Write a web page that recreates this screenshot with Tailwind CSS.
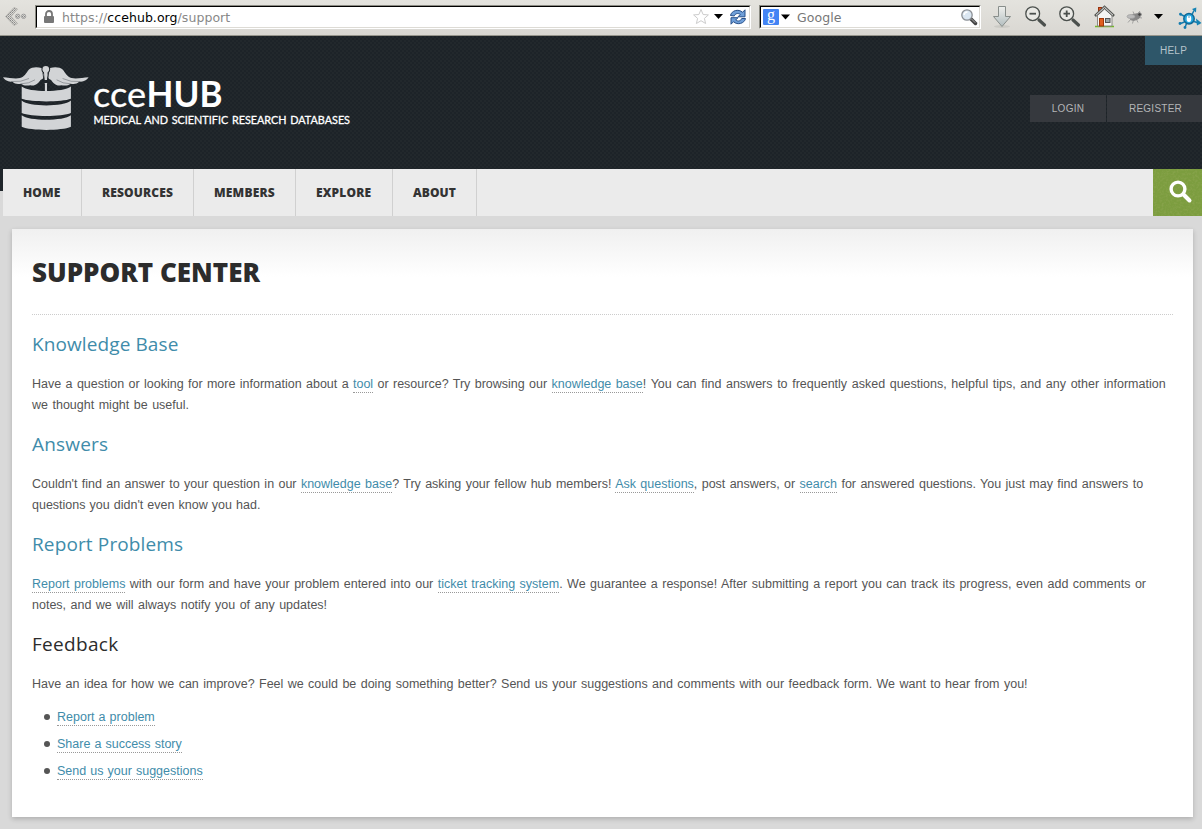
<!DOCTYPE html>
<html lang="en">
<head>
<meta charset="utf-8">
<title>cceHUB Support</title>
<script src="https://cdn.jsdelivr.net/npm/@tailwindcss/browser@4"></script>
</head>
<body class="h-[829px] w-[1202px] overflow-hidden bg-[#d9d9d9] font-['Liberation_Sans',sans-serif] text-[12.5px] text-[#555]">

<!-- Browser toolbar -->
<div class="flex h-[36px] w-full overflow-hidden border-b border-[#96958c] bg-linear-to-b from-[#e4e3de] to-[#d9d7d2] pt-[5px] font-['DejaVu_Sans',sans-serif] text-[12.5px]">
  <svg class="h-[24px] w-[35px] shrink-0" viewBox="0 5 35 24">
    <defs><pattern id="dots" width="2" height="2" patternUnits="userSpaceOnUse"><rect width="2" height="2" fill="#d8d7d3"/><rect width="1" height="1" fill="#888"/><rect x="1" y="1" width="1" height="1" fill="#a5a5a2"/></pattern></defs>
    <path d="M5.500 16.500 14 7.500l3.500 1.500-6.500 7.500 6.500 7-3.500 2z" fill="url(#dots)" stroke="#aaa9a5" stroke-width=".7"/>
    <circle cx="17.700" cy="16.300" r="2.200" fill="url(#dots)" stroke="#999" stroke-width=".8"/><circle cx="23.600" cy="16.300" r="2.200" fill="url(#dots)" stroke="#999" stroke-width=".8"/>
  </svg>
  <div class="flex h-[24px] w-[716px] shrink-0 items-center border border-t-[#8b8b83] border-r-white border-b-white border-l-[#8b8b83]">
    <div class="flex h-[22px] w-full items-center border border-t-black border-r-[#dddbd5] border-b-[#dddbd5] border-l-black bg-white">
      <svg class="ml-[6px] h-[14px] w-[12px]" viewBox="0 0 12 14"><path d="M3 6V4a3 3 0 0 1 6 0v2" fill="none" stroke="#777" stroke-width="1.800"/><rect x="1" y="6" width="10" height="7" rx="1" fill="#777"/></svg>
      <span class="ml-[7px] pt-[2px] tracking-[0.06px] text-[#888]">https://<span class="text-black">ccehub.org</span>/support</span>
      <svg class="ml-auto h-[20px] w-[59px]" viewBox="690 7 59 20">
        <path d="m701 9.500 2.100 5 5.300.4-4 3.500 1.200 5.100-4.600-2.800-4.600 2.800 1.200-5.100-4-3.500 5.300-.4z" fill="#fff" stroke="#ccc" stroke-linejoin="round"/>
        <path d="M714 14h9l-4.500 5z" fill="#000"/>
        <path d="M730.500 15.500c1-5 8-7 12-3.200l2.500-2.500v7h-7l2.300-2.300c-2.500-2-5.300-.7-6 1.500z" fill="#6f9fd8" stroke="#28508a"/>
        <path d="M745.500 18.500c-1 5-8 7-12 3.200L731 24.200v-6.500h7l-2.300 2.300c2.500 2 5.300.7 6-1.500z" fill="#6f9fd8" stroke="#28508a"/>
      </svg>
    </div>
  </div>
  <div class="ml-[8px] flex h-[24px] w-[222px] shrink-0 border border-t-[#8b8b83] border-r-white border-b-white border-l-[#8b8b83]">
    <div class="flex h-[22px] w-full items-center border border-t-black border-r-[#dddbd5] border-b-[#dddbd5] border-l-black bg-white">
      <span class="ml-[2px] flex h-[16px] w-[16px] items-center justify-center rounded-[1px] bg-[#4384f4] pb-[4px] font-['Liberation_Serif',serif] text-[16px] leading-none text-white">g</span>
      <svg class="ml-[2px] h-[6px] w-[9px]" viewBox="0 0 9 6"><path d="M0 .5h9L4.500 5.500z"/></svg>
      <span class="ml-[7px] pt-[2px] tracking-[0.06px] text-[#777]">Google</span>
      <svg class="mr-px ml-auto h-[18px] w-[18px]" viewBox="0 0 18 18"><path d="m10.500 10.500 5 5" stroke="#444" stroke-width="3.500" stroke-linecap="round"/><path d="m11.500 11 3.800 3.800" stroke="#aaa" stroke-width="1"/><circle cx="7" cy="7" r="5.200" fill="#dbe7f2" stroke="#8b8f94" stroke-width="1.300"/><path d="M4 7q.5-3 3.500-3" stroke="#fff" fill="none" stroke-width="1.500"/></svg>
    </div>
  </div>
  <svg class="h-[30px] w-[221px] shrink-0" viewBox="981 5 221 30">
    <defs><linearGradient id="arrow" x1="0" y1="0" x2="0" y2="1"><stop stop-color="#eff0ed"/><stop offset="1" stop-color="#b2bdbf"/></linearGradient></defs>
    <ellipse cx="1002" cy="26.500" rx="8" ry="1.500" fill="#cbcac5"/>
    <path d="M998.500 6.500h7v10h5L1002 26.500l-8.500-10h5z" fill="url(#arrow)" stroke="#888e8b"/>
    <g fill="#e9e9e5" stroke="#4b504d">
      <path d="m1039 20 5.500 5" stroke-width="3.200" stroke-linecap="round"/><circle cx="1032.700" cy="13.700" r="6.900" stroke-width="1.300"/><path d="M1029.500 13.700h6.500" stroke-width="1.800"/>
      <path d="m1073 20 5.500 5" stroke-width="3.200" stroke-linecap="round"/><circle cx="1066.700" cy="13.700" r="6.900" stroke-width="1.300"/><path d="M1063.500 13.700h6.500M1066.700 10.500v6.500" stroke-width="1.800"/>
    </g>
    <path d="M1095 26.500h19" stroke="#73b72a" stroke-width="1.500"/>
    <rect x="1098.500" y="7.500" width="3" height="6" fill="#df5a28" stroke="#96340f"/>
    <path d="M1097.500 15.500 1104.500 9l7.500 6.500v10.500h-14.500z" fill="#f5f5f3" stroke="#8a8a87"/>
    <path d="m1095 16 9.500-9 9.500 9" fill="none" stroke="#555753" stroke-width="2.600"/><path d="m1096 15.300 8.500-8 8.500 8" fill="none" stroke="#eee" stroke-width="1"/>
    <rect x="1099.500" y="18.500" width="4" height="7.500" fill="#e05f20" stroke="#a13809"/><rect x="1105.500" y="18.500" width="4.500" height="4" fill="#9da7a7" stroke="#555"/>
    <g stroke="#888" fill="#888"><ellipse cx="1135" cy="17" rx="5" ry="2.800" transform="rotate(-18 1135 17)"/><circle cx="1139.500" cy="14.500" r="1.800" fill="#444"/><ellipse cx="1131" cy="16.500" rx="4" ry="2" fill="#bbb" stroke="#999" stroke-width=".6"/><path d="m1131 19-3 3.500m5.500-2.500-1 3.500m4-4 1.500 3m0-9 2-2.500m-6 3-1-2.500m6 6 3 .5" fill="none" stroke-width=".7"/></g>
    <path d="M1154 14h9l-4.500 5z"/>
    <g fill="none" stroke="#147caf" stroke-width="1.500"><path d="m1181 14.500 5 2.500m6-2.500 2-4m-9.500 11.500-4 1.500m6 0-1.500 4m9-6 6 2"/><circle cx="1180.500" cy="14.200" r=".7"/><circle cx="1180" cy="23.500" r=".7"/><circle cx="1185" cy="27.500" r=".7"/></g>
    <path d="M1196.300 7.500 1192 9l4 3.500zM1196 18.500l5.500 4.500-4.500 2.500z" fill="#1583b4"/>
    <circle cx="1189" cy="18.700" r="5.200" fill="#27a7de" stroke="#0f6996" stroke-width="1.500"/><rect x="1186.700" y="15.500" width="4.500" height="6.500" rx="2.200" fill="#fff"/><path d="M1189 15.500v2.500" stroke="#147caf" stroke-width=".8"/>
  </svg>
</div>

<!-- Site header -->
<header class="flex h-[133px] justify-between bg-[#20262b] bg-[repeating-conic-gradient(#1d2328_0_25%,#22282c_0_50%)] bg-size-[4px_4px]">
  <svg class="h-[110px] w-[370px]" viewBox="0 36 370 110">
    <g fill="#d2d4d6">
      <circle cx="45.800" cy="69.200" r="3.300"/><path d="M43.800 70h4l-.8 10h-2.400z"/><path d="M44.700 83h2.400v9h-2.400z"/>
      <path id="wing" d="M41.500 68c-4.500-1.500-10-1-12.500 1.500-3 3.500-4.500 7.500-9 8.500-5 1.200-11-.5-17-.8 2.500 3.800 6 4.600 9.500 4.500 2 2.500 5.500 2.400 8.500 2 2.500 2.300 6.500 1.800 9.500 1.500 4 1.500 8-1.700 10-5.200 3-.8 4-3.500 3.500-5.500-1.500-2-3-3.500-2.500-6.500z"/>
      <use href="#wing" transform="translate(91.600 0) scale(-1 1)"/>
      <path d="M21.700 86.500c7 6 42 6 49.200 0v12.300c-9 3.500-40 3.500-49.200 0zM21.700 100.500c7 6.500 42 6.500 49.200 0V113c-9 4-40 4-49.200 0zM21.700 115.200c7 6 42 6 49.200 0v11.600c-9 4.200-40 4.200-49.200 0z"/>
    </g>
    <path d="M44.200 84v7m3.400-7v7M43 73l1 8m4.600-8-1 8" stroke="#20262b" stroke-width=".9"/>
    <path d="M11 81.500q10 1 18-3m-8 5.300q8 0 14-4M80.600 81.500q-10 1-18-3m8 5.300q-8 0-14-4" fill="none" stroke="#6b7176" stroke-width=".6"/>
    <g fill="#fff">
      <text x="93" y="107" font-family="Lato" font-size="34.500" textLength="53" lengthAdjust="spacingAndGlyphs" stroke="#fff" stroke-width=".3">cce</text>
      <text x="146.500" y="107" font-family="Lato" font-weight="700" font-size="36" textLength="76" lengthAdjust="spacingAndGlyphs">HUB</text>
      <text x="93.500" y="124.300" font-family="Lato" font-size="11" word-spacing="1" textLength="256.500" lengthAdjust="spacingAndGlyphs" stroke="#fff" stroke-width=".3">MEDICAL AND SCIENTIFIC RESEARCH DATABASES</text>
    </g>
  </svg>
  <div class="flex w-[172px] flex-col items-end text-[10px] tracking-[0.25px]">
    <a class="flex h-[29px] w-[57px] items-center justify-center bg-[#2e5669] text-[#b5c4cc]">HELP</a>
    <div class="mt-[30px] flex h-[27px] w-full gap-px text-[#b4b5b7]">
      <a class="flex w-[76px] items-center justify-center bg-[#36393e]">LOGIN</a>
      <a class="flex w-[95px] items-center justify-center bg-[#36393e] pl-[2px]">REGISTER</a>
    </div>
  </div>
</header>

<div class="bg-linear-to-b from-[#1f252a] from-[22px] to-[#d9d9d9] to-[22px] pl-[3px]">
  <nav class="flex h-[47px] bg-[#ebebeb] font-['Open_Sans',sans-serif] text-[12px] font-extrabold text-[#333]">
    <a class="flex w-[79px] items-center border-r border-[#d0d0d0] pl-[20px]"><span class="tracking-[0.15px]">HOME</span></a>
    <a class="flex w-[112px] items-center border-r border-[#d0d0d0] pl-[20px]"><span class="tracking-[0.15px]">RESOURCES</span></a>
    <a class="flex w-[102px] items-center border-r border-[#d0d0d0] pl-[20px]"><span class="tracking-[0.2px]">MEMBERS</span></a>
    <a class="flex w-[97px] items-center border-r border-[#d0d0d0] pl-[20px]"><span class="tracking-[0.15px]">EXPLORE</span></a>
    <a class="flex w-[84px] items-center border-r border-[#d0d0d0] pl-[20px]"><span class="tracking-[0.05px]">ABOUT</span></a>
    <a class="ml-auto w-[49px] bg-[#7c9d3f]">
      <svg class="h-[47px] w-[49px]" viewBox="0 0 49 47"><filter id="grain"><feTurbulence type="fractalNoise" baseFrequency=".45" numOctaves="2"/><feColorMatrix values="0 0 0 0 .3 0 0 0 0 .4 0 0 0 0 .1 0 1.600 0 0 -.65"/></filter><rect width="49" height="47" filter="url(#grain)" opacity=".7"/><circle cx="25" cy="20" r="6.900" fill="none" stroke="#fff" stroke-width="3.400"/><path d="m30.500 25.500 6 6" stroke="#fff" stroke-width="4" stroke-linecap="round"/></svg>
    </a>
  </nav>
</div>

<!-- Page card -->
<main class="mt-[13px] ml-[12px] h-[588px] w-[1181px] bg-white bg-linear-to-b from-[#f0f0f0] to-white to-[48px] px-[20px] whitespace-nowrap shadow-[0_2px_5px_rgba(0,0,0,0.2)]">
  <h1 class="flex h-[86px] items-center border-b border-dotted border-[#ccc] pt-[2px] font-['Open_Sans',sans-serif] text-[26px] font-extrabold text-[#2c2c2c]"><span>SUPPORT CENTER</span></h1>
  <section class="h-[100px] pt-[14px]">
    <h2 class="h-[30px] font-['Open_Sans',sans-serif] text-[19px] leading-[30px] tracking-[0.1px] text-[#3f8caa]">Knowledge Base</h2>
    <p class="mt-[15px] leading-[21px] [word-spacing:1.03px]"><span><span class="[word-spacing:0.9px]">Have a question or looking for more information about a <a class="border-b border-dotted border-[#999] pb-px text-[#3f8caa]">tool</a> or resource? Try browsing our <a class="border-b border-dotted border-[#999] pb-px text-[#3f8caa]">knowledge base</a></span><span class="[word-spacing:1.16px]">! You can find answers to frequently asked questions, helpful tips, and any other information</span></span><br><span>we thought might be useful.</span></p>
  </section>
  <section class="h-[100px] pt-[14px]">
    <h2 class="h-[30px] font-['Open_Sans',sans-serif] text-[19px] leading-[30px] tracking-[0.2px] text-[#3f8caa]">Answers</h2>
    <p class="mt-[15px] leading-[21px] [word-spacing:0.89px]"><span>Couldn't find an answer to your question in our <a class="border-b border-dotted border-[#999] pb-px text-[#3f8caa]">knowledge base</a>? Try asking your fellow hub members! <a class="border-b border-dotted border-[#999] pb-px text-[#3f8caa]">Ask questions</a>, post answers, or <a class="border-b border-dotted border-[#999] pb-px text-[#3f8caa]">search</a> for answered questions. You just may find answers to</span><br><span class="[word-spacing:0.6px]">questions you didn't even know you had.</span></p>
  </section>
  <section class="h-[100px] pt-[14px]">
    <h2 class="h-[30px] font-['Open_Sans',sans-serif] text-[19px] leading-[30px] tracking-[0.13px] text-[#3f8caa]">Report Problems</h2>
    <p class="mt-[15px] leading-[21px] [word-spacing:0.98px]"><span><a class="border-b border-dotted border-[#999] pb-px text-[#3f8caa]">Report problems</a> with our form and have your problem entered into our <a class="border-b border-dotted border-[#999] pb-px text-[#3f8caa]">ticket tracking system</a>. We guarantee a response! After submitting a report you can track its progress, even add comments or</span><br><span>notes, and we will always notify you of any updates!</span></p>
  </section>
  <section class="pt-[14px]">
    <h2 class="h-[30px] font-['Open_Sans',sans-serif] text-[19px] leading-[30px] tracking-[0.3px] text-[#2c2c2c]">Feedback</h2>
    <p class="mt-[15px] leading-[21px] [word-spacing:0.93px]"><span>Have an idea for how we can improve? Feel we could be doing something better? Send us your suggestions and comments with our feedback form. We want to hear from you!</span></p>
    <ul class="mt-[9px] [word-spacing:0.6px]">
      <li class="flex h-[27px] items-center pb-px"><i class="ml-[12px] h-[6px] w-[6px] rounded-full bg-[#555]"></i><a class="ml-[7px] h-[18px] border-b border-dotted border-[#999] leading-[18px] text-[#3f8caa]">Report a problem</a></li>
      <li class="flex h-[27px] items-center pb-px"><i class="ml-[12px] h-[6px] w-[6px] rounded-full bg-[#555]"></i><a class="ml-[7px] h-[18px] border-b border-dotted border-[#999] leading-[18px] text-[#3f8caa]">Share a success story</a></li>
      <li class="flex h-[27px] items-center pb-px"><i class="ml-[12px] h-[6px] w-[6px] rounded-full bg-[#555]"></i><a class="ml-[7px] h-[18px] border-b border-dotted border-[#999] leading-[18px] text-[#3f8caa]">Send us your suggestions</a></li>
    </ul>
  </section>
</main>
</body>
</html>
